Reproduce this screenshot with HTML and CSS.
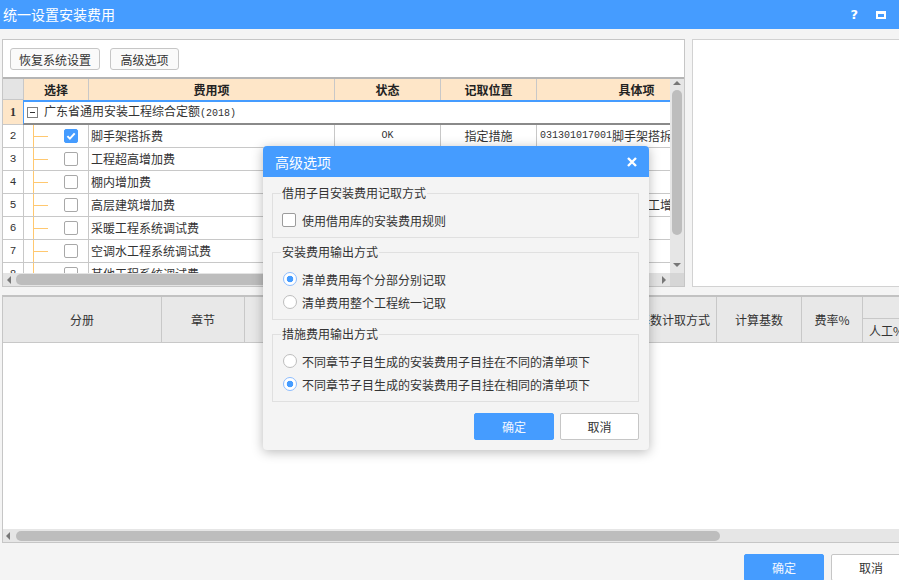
FILE: index.html
```html
<!DOCTYPE html>
<html>
<head>
  <meta charset="utf-8">
  <link rel="stylesheet" href="styles.css">
</head>
<body>
  <div class="window">
    <div class="titlebar">
      <span class="title">统一设置安装费用</span>
      <div class="title-tools">
        <span class="help">?</span>
        <span class="restore"></span>
      </div>
    </div>

    <div class="main">
      <div class="top-area">
        <div class="left-panel">
          <div class="toolbar">
            <button class="tool-btn btn-restore">恢复系统设置</button>
            <button class="tool-btn btn-advanced">高级选项</button>
          </div>

          <div class="grid-view">
            <div class="grid-main">
              <div class="grid-row grid-head">
                <div class="cell c-num"></div>
                <div class="cell">选择</div>
                <div class="cell">费用项</div>
                <div class="cell">状态</div>
                <div class="cell">记取位置</div>
                <div class="cell">具体项</div>
              </div>

              <div class="grid-row row-group">
                <div class="cell c-num">1</div>
                <div class="cell c-group">
                  <span class="fold"></span>
                  <span>广东省通用安装工程综合定额<span class="code">(2018)</span></span>
                </div>
              </div>

              <div class="grid-row">
                <div class="cell c-num">2</div>
                <div class="cell c-sel"><span class="branch"></span><span class="check checked"><svg width="14" height="14" viewBox="0 0 14 14"><path d="M3.4 7.1l2.5 2.5 4.8-5.2" fill="none" stroke="#fff" stroke-width="2"/></svg></span></div>
                <div class="cell c-name">脚手架搭拆费</div>
                <div class="cell c-mid"><span class="code">OK</span></div>
                <div class="cell c-mid">指定措施</div>
                <div class="cell c-detail"><span class="code">031301017001</span>脚手架搭拆费</div>
              </div>
              <div class="grid-row">
                <div class="cell c-num">3</div>
                <div class="cell c-sel"><span class="branch"></span><span class="check"></span></div>
                <div class="cell c-name">工程超高增加费</div>
                <div class="cell c-mid"></div>
                <div class="cell c-mid"></div>
                <div class="cell c-detail"></div>
              </div>
              <div class="grid-row">
                <div class="cell c-num">4</div>
                <div class="cell c-sel"><span class="branch"></span><span class="check"></span></div>
                <div class="cell c-name">棚内增加费</div>
                <div class="cell c-mid"></div>
                <div class="cell c-mid"></div>
                <div class="cell c-detail"></div>
              </div>
              <div class="grid-row">
                <div class="cell c-num">5</div>
                <div class="cell c-sel"><span class="branch"></span><span class="check"></span></div>
                <div class="cell c-name">高层建筑增加费</div>
                <div class="cell c-mid"></div>
                <div class="cell c-mid">指定措施</div>
                <div class="cell c-detail"><span class="code">031302007001</span>高层施工增加费</div>
              </div>
              <div class="grid-row">
                <div class="cell c-num">6</div>
                <div class="cell c-sel"><span class="branch"></span><span class="check"></span></div>
                <div class="cell c-name">采暖工程系统调试费</div>
                <div class="cell c-mid"></div>
                <div class="cell c-mid"></div>
                <div class="cell c-detail"></div>
              </div>
              <div class="grid-row">
                <div class="cell c-num">7</div>
                <div class="cell c-sel"><span class="branch"></span><span class="check"></span></div>
                <div class="cell c-name">空调水工程系统调试费</div>
                <div class="cell c-mid"></div>
                <div class="cell c-mid"></div>
                <div class="cell c-detail"></div>
              </div>
              <div class="grid-row">
                <div class="cell c-num">8</div>
                <div class="cell c-sel"><span class="branch"></span><span class="check"></span></div>
                <div class="cell c-name">其他工程系统调试费</div>
                <div class="cell c-mid"></div>
                <div class="cell c-mid"></div>
                <div class="cell c-detail"></div>
              </div>
            </div>

            <div class="vscroll">
              <span class="arrow arrow-up"></span>
              <span class="vthumb"></span>
              <span class="arrow arrow-down"></span>
            </div>
          </div>

          <div class="hscroll">
            <div class="hs-track">
              <span class="arrow arrow-left"></span>
              <span class="hthumb"></span>
              <span class="arrow arrow-right"></span>
            </div>
            <div class="hs-corner"></div>
          </div>
        </div>

        <div class="right-panel"></div>
      </div>

      <div class="lower-panel">
        <div class="lower-head">
          <div class="hcell span2">分册</div>
          <div class="hcell span2">章节</div>
          <div class="hcell span2">子目范围</div>
          <div class="hcell span2">记取位置</div>
          <div class="hcell span2">具体项</div>
          <div class="hcell span2">基数计取方式</div>
          <div class="hcell span2">计算基数</div>
          <div class="hcell span2">费率%</div>
          <div class="hcell group">其中</div>
          <div class="hcell">人工%</div>
          <div class="hcell">材料%</div>
          <div class="hcell">机械%</div>
        </div>
        <div class="lower-body"></div>
        <div class="lower-scroll">
          <span class="arrow arrow-left"></span>
          <span class="lthumb"></span>
        </div>
      </div>

      <div class="footer">
        <button class="btn btn-primary">确定</button>
        <button class="btn">取消</button>
      </div>
    </div>

    <div class="dialog">
      <div class="dialog-title">
        <span>高级选项</span>
        <svg class="close" width="10" height="10" viewBox="0 0 10 10"><path d="M1 1l8 8M9 1l-8 8" stroke="#fff" stroke-width="2.4"/></svg>
      </div>
      <div class="dialog-body">
        <fieldset class="opt-group">
          <legend>借用子目安装费用记取方式</legend>
          <div class="opt-list">
            <div class="opt"><span class="box"></span>使用借用库的安装费用规则</div>
          </div>
        </fieldset>
        <fieldset class="opt-group">
          <legend>安装费用输出方式</legend>
          <div class="opt-list">
            <div class="opt"><span class="radio on"></span>清单费用每个分部分别记取</div>
            <div class="opt"><span class="radio"></span>清单费用整个工程统一记取</div>
          </div>
        </fieldset>
        <fieldset class="opt-group">
          <legend>措施费用输出方式</legend>
          <div class="opt-list">
            <div class="opt"><span class="radio"></span>不同章节子目生成的安装费用子目挂在不同的清单项下</div>
            <div class="opt"><span class="radio on"></span>不同章节子目生成的安装费用子目挂在相同的清单项下</div>
          </div>
        </fieldset>
        <div class="dialog-actions">
          <button class="btn btn-primary">确定</button>
          <button class="btn">取消</button>
        </div>
      </div>
    </div>
  </div>
</body>
</html>
```

FILE: styles.css
```css
:root {
  --blue: #459cff;
  --line: #c8c8c8;
  --peach: #fee6c8;
  --bg: #f4f4f4;
  --text: #333;
  --tree: #ffc870;
}

* {
  box-sizing: border-box;
}

body {
  margin: 0;
  font-family: "Noto Sans CJK SC", sans-serif;
  font-size: 12px;
  color: var(--text);
  background: var(--bg);
}

.window {
  position: relative;
  width: 899px;
  height: 580px;
  overflow: hidden;
  background: var(--bg);
}

/* Title bar */
.titlebar {
  height: 29px;
  background: var(--blue);
  color: #fff;
  display: flex;
  align-items: center;
  justify-content: space-between;
  padding: 0 13px 0 3px;
}

.title {
  font-size: 14px;
  line-height: 29px;
}

.title-tools {
  display: flex;
  align-items: center;
  gap: 18px;
}

.help {
  font-family: "DejaVu Sans", sans-serif;
  font-weight: bold;
  font-size: 13px;
}

.restore {
  width: 10px;
  height: 8px;
  border: 2px solid #fff;
  border-top-width: 3px;
}

.main {
  padding: 10px 0 0 2px;
}

.top-area {
  display: flex;
  gap: 7px;
  height: 248px;
}

.left-panel {
  width: 683px;
  flex-shrink: 0;
  border: 1px solid #c6c6c6;
  background: #fff;
  display: flex;
  flex-direction: column;
}

.right-panel {
  width: 230px;
  flex-shrink: 0;
  border: 1px solid #d2d2d2;
  background: #fff;
}

.toolbar {
  height: 37px;
  display: flex;
  gap: 10px;
  padding: 8px 0 0 7px;
}

.tool-btn {
  height: 22px;
  padding: 0;
  border: 1px solid #c6c6c6;
  border-radius: 3px;
  background: #fafafa;
  font-family: inherit;
  font-size: 12px;
  color: var(--text);
}

.btn-restore { width: 90px; }
.btn-advanced { width: 69px; }

/* Upper grid */
.grid-view {
  height: 196px;
  display: flex;
  border-top: 2px solid #b5b5b5;
}

.grid-main {
  width: 667px;
  overflow: hidden;
}

.grid-row {
  display: grid;
  grid-template-columns: 21px 65px 246px 106px 96px 200px;
  height: 23px;
}

.cell {
  display: flex;
  align-items: center;
  border-right: 1px solid var(--line);
  border-bottom: 1px solid var(--line);
  white-space: nowrap;
  overflow: hidden;
  line-height: 16px;
}

.grid-head {
  height: 21px;
  background: var(--peach);
  font-weight: bold;
  color: #222;
}

.grid-head .cell {
  justify-content: center;
  border-bottom: none;
}

.grid-head .c-num {
  background: #e4e4e4;
  border-bottom: 1px solid var(--line);
}

.c-num {
  justify-content: center;
  font-family: "Liberation Mono", monospace;
  font-size: 11px;
}

.row-group {
  grid-template-columns: 20px 1fr;
  height: 25px;
}

.row-group .c-num {
  background: var(--peach);
  border-right: none;
  font-family: "Liberation Serif", serif;
  font-weight: bold;
  font-size: 12px;
}

.c-group {
  border-top: 2px solid var(--blue);
  border-left: 1px solid var(--blue);
  border-right: none;
  border-bottom: 2px solid #8a8a8a;
  padding-left: 3px;
  gap: 6px;
}

.fold {
  width: 11px;
  height: 11px;
  border: 1px solid #808080;
  background: linear-gradient(#333, #333) center / 5px 1px no-repeat, #fff;
}

.code {
  font-family: "Liberation Mono", monospace;
  font-size: 10px;
}

.c-sel {
  align-items: stretch;
}

.branch {
  width: 15px;
  margin-left: 9px;
  border-left: 1px solid var(--tree);
  background: linear-gradient(var(--tree), var(--tree)) left center / 15px 1px no-repeat;
}

.check {
  align-self: center;
  width: 14px;
  height: 14px;
  margin-left: 16px;
  border: 1px solid #a8a8a8;
  border-radius: 2px;
  background: #fff;
}

.check.checked {
  border-color: var(--blue);
  background: var(--blue);
}

.check svg {
  display: block;
  margin: -1px;
}

.c-name {
  padding-left: 2px;
}

.c-mid {
  justify-content: center;
}

.c-detail {
  padding-left: 3px;
}

/* Scrollbars */
.vscroll {
  width: 14px;
  background: #e6e6e6;
  display: flex;
  flex-direction: column;
  align-items: center;
}

.arrow {
  width: 0;
  height: 0;
  border: 4px solid transparent;
}

.arrow-up {
  margin-top: 2px;
  border-bottom-color: #777;
  border-top-width: 0;
}

.arrow-down {
  margin-top: auto;
  margin-bottom: 6px;
  border-top-color: #777;
  border-bottom-width: 0;
}

.arrow-left {
  border-right-color: #777;
  border-left-width: 0;
}

.arrow-right {
  margin-left: auto;
  border-left-color: #777;
  border-right-width: 0;
}

.vthumb {
  width: 10px;
  height: 145px;
  margin-top: 5px;
  border-radius: 5px;
  background: #bdbdbd;
}

.hscroll {
  height: 13px;
  display: flex;
}

.hs-track {
  width: 667px;
  display: flex;
  align-items: center;
  padding: 0 4px;
  background: #e4e4e4;
}

.hthumb {
  width: 560px;
  height: 11px;
  margin-left: 5px;
  border-radius: 5px;
  background: #bdbdbd;
}

.hs-corner {
  width: 14px;
  background: #d6d6d6;
}

/* Lower grid */
.lower-panel {
  width: 1020px;
  margin-top: 8px;
  border-top: 2px solid #c2c2c2;
  border-left: 1px solid #c6c6c6;
  border-bottom: 1px solid #c6c6c6;
  background: #fff;
}

.lower-head {
  display: grid;
  grid-template-columns: 159px 83px 150px 120px 117px 85px 85px 61px 48px 48px 48px;
  grid-template-rows: 22px 24px;
  background: #e8e8e8;
}

.hcell {
  display: flex;
  align-items: center;
  justify-content: center;
  border-right: 1px solid var(--line);
  border-bottom: 1px solid var(--line);
  white-space: nowrap;
}

.span2 {
  grid-row: span 2;
}

.group {
  grid-column: span 3;
}

.lower-body {
  height: 186px;
}

.lower-scroll {
  height: 13px;
  display: flex;
  align-items: center;
  padding-left: 3px;
  background: #e6e6e6;
}

.lthumb {
  width: 704px;
  height: 10px;
  margin-left: 6px;
  border-radius: 5px;
  background: #bdbdbd;
}

/* Buttons */
.footer {
  display: flex;
  justify-content: flex-end;
  gap: 7px;
  margin-top: 11px;
  margin-right: -12px;
}

.btn {
  width: 80px;
  height: 27px;
  padding: 0;
  border: 1px solid #c6c6c6;
  border-radius: 2px;
  background: #fff;
  font-family: inherit;
  font-size: 12px;
  color: var(--text);
}

.btn-primary {
  border-color: var(--blue);
  background: var(--blue);
  color: #f2f7ff;
}

/* Dialog */
.dialog {
  position: absolute;
  left: 263px;
  top: 146px;
  width: 386px;
  height: 304px;
  border-radius: 4px;
  overflow: hidden;
  background: var(--bg);
  box-shadow: 0 2px 12px rgba(0, 0, 0, 0.28);
}

.dialog-title {
  height: 31px;
  background: var(--blue);
  color: #fff;
  font-size: 14px;
  display: flex;
  align-items: center;
  justify-content: space-between;
  padding: 0 12px 0 12px;
}

.close {
  display: block;
}

.dialog-body {
  padding: 8px 10px 10px 9px;
}

.opt-group {
  margin: 0;
  padding: 9px 10px 7px 9px;
  border: 1px solid #e0e0e0;
  min-width: 0;
}

.opt-group + .opt-group {
  margin-top: 6px;
}

.opt-group legend {
  padding: 0 1px;
  margin-left: -1px;
  line-height: 16px;
  font-size: 12px;
}

.opt-list {
  display: flex;
  flex-direction: column;
  gap: 3px;
}

.opt {
  height: 20px;
  display: flex;
  align-items: center;
  gap: 6px;
  white-space: nowrap;
}

.box {
  width: 14px;
  height: 14px;
  border: 1px solid #9c9c9c;
  border-radius: 2px;
  background: #fff;
}

.radio {
  width: 14px;
  height: 14px;
  margin-left: 1px;
  margin-right: -1px;
  border: 1px solid #bdbdbd;
  border-radius: 50%;
  background: #fff;
}

.radio.on {
  border-color: #8dbdff;
  background: radial-gradient(circle, var(--blue) 0 3px, #fff 3.6px);
}

.dialog-actions {
  display: flex;
  justify-content: flex-end;
  gap: 6px;
  margin-top: 11px;
}

.dialog-actions .btn:last-child {
  width: 79px;
}
```
